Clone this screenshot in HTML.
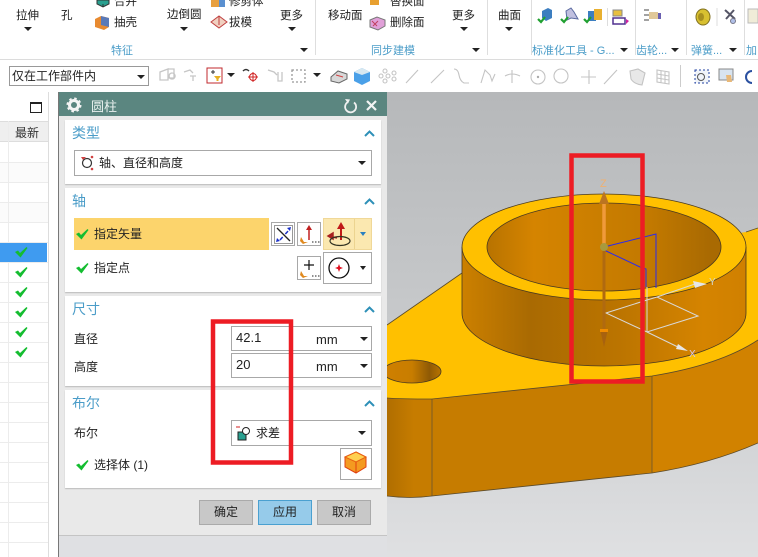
<!DOCTYPE html>
<html><head><meta charset="utf-8"><style>
html,body{margin:0;padding:0;background:#fff}
#p{position:relative;width:758px;height:557px;overflow:hidden;font-family:"Liberation Sans","Noto Sans CJK SC",sans-serif;font-size:11px;color:#222}
.a{position:absolute;white-space:nowrap}
.r{position:absolute;box-sizing:border-box}
.h{color:#4a9cc8;font-size:14px}
.card{position:absolute;left:65px;width:316px;background:#fff;box-shadow:0 1px 1px #bbb}
.box{position:absolute;box-sizing:border-box;border:1px solid #a8a8a8;background:#fff}
.tri{position:absolute;width:0;height:0;border-left:4px solid transparent;border-right:4px solid transparent;border-top:4px solid #222}
.sep{position:absolute;top:0;height:55px;width:1px;background:#dedede}
svg{position:absolute;left:0;top:0}
</style></head><body><div id="p">
<!-- ribbon -->
<div class="r" style="left:0;top:0;width:758px;height:60px;background:#fff;border-bottom:1px solid #dcdcdc"></div>
<div class="sep" style="left:315px"></div><div class="sep" style="left:487px"></div><div class="sep" style="left:531px"></div><div class="sep" style="left:635px"></div><div class="sep" style="left:686px"></div><div class="sep" style="left:744px"></div>
<div class="a" style="left:16px;top:7px;font-size:11.500px">拉伸</div><div class="a" style="left:61px;top:7px;font-size:11.500px">孔</div>
<div class="a" style="left:114px;top:-7px;font-size:11.500px">合并</div><div class="a" style="left:114px;top:14px;font-size:11.500px">抽壳</div>
<div class="a" style="left:167px;top:6px;font-size:11.500px">边倒圆</div>
<div class="a" style="left:229px;top:-7px;font-size:11.500px">修剪体</div><div class="a" style="left:229px;top:14px;font-size:11.500px">拔模</div>
<div class="a" style="left:280px;top:7px;font-size:11.500px">更多</div><div class="a" style="left:328px;top:7px;font-size:11.500px">移动面</div>
<div class="a" style="left:390px;top:-7px;font-size:11.500px">替换面</div><div class="a" style="left:390px;top:14px;font-size:11.500px">删除面</div>
<div class="a" style="left:452px;top:7px;font-size:11.500px">更多</div><div class="a" style="left:498px;top:7px;font-size:11.500px">曲面</div>
<div class="tri" style="left:24px;top:27px"></div><div class="tri" style="left:180px;top:27px"></div><div class="tri" style="left:288px;top:27px"></div><div class="tri" style="left:460px;top:27px"></div><div class="tri" style="left:505px;top:27px"></div>
<div class="tri" style="left:300px;top:48px"></div><div class="tri" style="left:472px;top:48px"></div><div class="tri" style="left:620px;top:48px"></div><div class="tri" style="left:671px;top:48px"></div><div class="tri" style="left:729px;top:48px"></div>
<div class="a h" style="left:111px;top:42px;font-size:11px">特征</div>
<div class="a h" style="left:371px;top:42px;font-size:11px">同步建模</div>
<div class="a h" style="left:532px;top:42px;font-size:11px">标准化工具 - G...</div>
<div class="a h" style="left:636px;top:42px;font-size:11px">齿轮...</div>
<div class="a h" style="left:691px;top:42px;font-size:11px">弹簧...</div>
<div class="a h" style="left:746px;top:42px;font-size:11px">加</div>
<!-- filter bar -->
<div class="r" style="left:0;top:60px;width:758px;height:32px;background:#fff"></div>
<div class="box" style="left:9px;top:66px;width:140px;height:20px;border-color:#999"></div>
<div class="a" style="left:12px;top:67px;font-size:12px;line-height:18px">仅在工作部件内</div>
<div class="tri" style="left:137px;top:75px"></div><div class="tri" style="left:227px;top:73px"></div><div class="tri" style="left:313px;top:73px"></div>
<!-- left table -->
<div class="r" style="left:0;top:92px;width:59px;height:465px;background:#fff;border-right:1px solid #777"></div>
<div class="r" style="left:30px;top:102px;width:12px;height:11px;border:1px solid #222;border-top:2px solid #222"></div>
<div class="r" style="left:0;top:121px;width:48px;height:21px;background:#efefef;border-top:1px solid #ddd;border-bottom:1px solid #ddd"></div>
<div class="a" style="left:15px;top:124px;font-size:12px;color:#333">最新</div>
<svg width="58" height="557">
<rect x="0" y="163" width="48" height="19" fill="#fbfbfb"/><rect x="0" y="203" width="48" height="19" fill="#fbfbfb"/>
<g stroke="#ececec"><path d="M8.500 121V557"/>
<path d="M0 162.500H48M0 182.500H48M0 202.500H48M0 222.500H48M0 242.500H48M0 262.500H48M0 282.500H48M0 302.500H48M0 322.500H48M0 342.500H48M0 362.500H48M0 382.500H48M0 402.500H48M0 422.500H48M0 442.500H48M0 462.500H48M0 482.500H48M0 502.500H48M0 522.500H48M0 542.500H48"/></g>
<path d="M48.500 92V557" stroke="#ddd"/>
<rect x="0" y="243" width="47" height="19" fill="#3f9bf0"/>
<g fill="#14bd30"><path d="M15 252l3-1.500 2 2.500 6.500-6 1 1-7 9.500z"/>
<path d="M15 272l3-1.500 2 2.500 6.500-6 1 1-7 9.500z"/><path d="M15 292l3-1.500 2 2.500 6.500-6 1 1-7 9.500z"/><path d="M15 312l3-1.500 2 2.500 6.500-6 1 1-7 9.500z"/><path d="M15 332l3-1.500 2 2.500 6.500-6 1 1-7 9.500z"/><path d="M15 352l3-1.500 2 2.500 6.500-6 1 1-7 9.500z"/></g>
</svg>
<!-- viewport -->
<svg width="758" height="557" viewBox="0 0 758 557">
<defs>
<linearGradient id="bg" x1="0" y1="0" x2="0" y2="1"><stop offset="0" stop-color="#b6b8ba"/><stop offset=".55" stop-color="#c9cbcd"/><stop offset="1" stop-color="#dfe0e2"/></linearGradient>
<linearGradient id="out" x1="0" x2="1" y1="0" y2="0"><stop offset="0" stop-color="#cc8000"/><stop offset=".24" stop-color="#a96a02"/><stop offset=".55" stop-color="#bb7400"/><stop offset=".85" stop-color="#d58400"/><stop offset="1" stop-color="#d08000"/></linearGradient>
<linearGradient id="inn" x1="0" x2="1" y1="0" y2="0"><stop offset="0" stop-color="#b87300"/><stop offset=".2" stop-color="#d58400"/><stop offset=".7" stop-color="#c27900"/><stop offset=".95" stop-color="#a96a02"/><stop offset="1" stop-color="#a96a02"/></linearGradient>
<linearGradient id="hole" x1="0" x2="1" y1="0" y2="0"><stop offset="0" stop-color="#d08000"/><stop offset=".5" stop-color="#c87d00"/><stop offset=".8" stop-color="#8f5a05"/><stop offset="1" stop-color="#b87400"/></linearGradient>
<linearGradient id="sd" x1="0" x2="1" y1="0" y2="0"><stop offset="0" stop-color="#b06e00"/><stop offset=".6" stop-color="#c67c00"/><stop offset="1" stop-color="#c67c00"/></linearGradient>
</defs>
<rect x="387" y="92" width="371" height="465" fill="url(#bg)"/>
<!-- side wall -->
<path d="M387 398L413 399 432 399 652 376Q720 365 758 340V443Q710 464 652 473L432 496Q410 499 387 496Z" fill="#c67c00"/>
<path d="M387 398Q400 399 432 399V496Q410 499 387 496Z" fill="url(#sd)"/>
<path d="M652 376Q720 365 758 340V443Q710 464 652 473Z" fill="#d18200"/>
<path d="M432 399V496M652 376V473" stroke="#6a5430" stroke-width=".8" fill="none"/>
<path d="M387 496Q410 499 432 496L652 473Q710 464 758 443" stroke="#5a4a2a" stroke-width=".8" fill="none"/>
<!-- top face -->
<path d="M387 325L462 273 746 232 758 228V340Q720 365 652 376L432 399Q400 399 387 398Z" fill="#ffc000"/>
<path d="M387 325L462 273M746 232L758 228M387 398Q400 399 432 399L652 376Q720 365 758 340" stroke="#5a4a2a" stroke-width=".8" fill="none"/>
<!-- hole -->
<ellipse cx="412" cy="371.500" rx="29" ry="11.500" fill="url(#hole)" stroke="#4a3a20" stroke-width=".8"/>
<!-- boss -->
<path d="M462 247V313A142 53 0 0 0 746 313V247Z" fill="url(#out)"/>
<path d="M462 247V313A142 53 0 0 0 746 313V247" fill="none" stroke="#4a3a20" stroke-width=".8"/>
<ellipse cx="604" cy="247" rx="142" ry="53" fill="#ffc000" stroke="#4a3a20" stroke-width=".8"/>
<ellipse cx="604" cy="247" rx="117" ry="44" fill="url(#inn)" stroke="#4a3a20" stroke-width=".8"/>
<!-- triad -->
<path d="M604 247L656 234V288M604 250L640 267 646 269V287" fill="none" stroke="#2a2af0" stroke-width="1"/>
<path d="M647 287V332M606 313L647 300 657 297 698 316 647 332ZM657 297L695 284M647 332L680 348" fill="none" stroke="#d9d9d9" stroke-width="1"/>
<path d="M693 281L707 284 695 288ZM678 344L688 351 676 349Z" fill="#e6e6e6"/>
<text x="709" y="285" font-size="10" fill="#d8d8c8" font-family="Liberation Sans">Y</text>
<text x="689" y="357" font-size="10" fill="#d8c8e8" font-family="Liberation Sans">X</text>
<path d="M604 247V330" stroke="#b06a10" stroke-width="3"/>
<path d="M604 247V200" stroke="#f09a3a" stroke-width="3.500"/>
<path d="M604 191L609 204H599Z" fill="#bb7420"/>
<path d="M600 329H608L604 347Z" fill="#a8620f"/><rect x="600" y="329" width="8" height="3" fill="#f08c00"/>
<circle cx="604" cy="247" r="4" fill="#a89a3c"/>
<text x="600" y="187" font-size="11" fill="#f0b070" font-family="Liberation Sans">Z</text>
</svg>
<!-- toolbar icons -->
<svg width="758" height="92" viewBox="0 0 758 92">
<g fill="none" stroke="#c6c6c6" stroke-width="1.300">
<path d="M160 72l8-3v11h-8zM168 69h6v9h-6M172 73a3 3 0 1 0 .1 0"/><path d="M184 72l6-2 3 3M190 76h6M193 76v5"/>
<path d="M268 70l6 2 3 3M278 72v9h4v-9"/><rect x="292" y="70" width="13" height="12" stroke-dasharray="2 2" stroke="#999"/>
</g>
<rect x="207" y="68" width="15" height="15" fill="#fff" stroke="#c0282c"/><path d="M211 72h4M213 70v4" stroke="#333"/><path d="M214 76h7l-2.500 3v2h-2v-2z" fill="#e8b020"/>
<path d="M243 71q3-3 6 0" fill="none" stroke="#333" stroke-width="1.500"/><circle cx="253" cy="77" r="3.500" fill="none" stroke="#d02020"/><path d="M248 77h10M253 72v10" stroke="#d02020"/>
<path d="M331 77l7-6 9 3v5l-8 4-8-2z" fill="#d8d8d8" stroke="#666"/><path d="M336 75l7 2" stroke="#d04040"/>
<path d="M354 72l8-4 8 4v9l-8 4-8-4z" fill="#4aa0e8"/><path d="M354 72l8-4 8 4-8 3z" fill="#d8e8f0"/>
<g fill="none" stroke="#c4c4c4" stroke-width="1.100">
<circle cx="388" cy="76" r="2"/><circle cx="381" cy="76" r="2"/><circle cx="385" cy="71" r="2"/><circle cx="385" cy="81" r="2"/><circle cx="394" cy="73" r="2"/><circle cx="394" cy="79" r="2"/>
<path d="M406 83l12-13M431 83l13-13M454 69q4 0 5 6t5 8h5M481 83l4-13 5 5 2 6 3-7M505 76q7-4 15 0M512 70v13"/>
<circle cx="538" cy="77" r="7"/><circle cx="561" cy="76" r="7"/><path d="M581 77h15M589 70v14M604 84l13-14"/>
<path d="M630 71l8-2 7 4-3 12q-8-1-11-6z" fill="#e8e8e8"/><path d="M657 70l12 2v12l-12-2zM657 74l12 2M657 78l12 2M661 71v12M665 72v11"/></g>
<circle cx="538" cy="77" r="1.200" fill="#aaa"/>
<path d="M680.500 65V87" stroke="#ccc"/>
<rect x="695" y="70" width="14" height="13" fill="#f0f4fa" stroke="#2040a0" stroke-dasharray="2 2"/><circle cx="701" cy="77" r="3.500" fill="none" stroke="#555"/>
<rect x="719" y="69" width="14" height="11" fill="#d8e4f0" stroke="#888"/><path d="M726 75h5l1 7h-5z" fill="#e8b878"/>
<path d="M752 71a6 6 0 0 0 0 12" fill="none" stroke="#2a50a0" stroke-width="2"/>
<!-- ribbon icons -->
<path d="M97 0h12v4l-6 3-6-3zM103 4v3" fill="#2aa090" stroke="#333"/>
<path d="M95 19l6-3 8 2v9l-5 3-9-3z" fill="#e88a30"/><path d="M101 16l8 2v9l-8-2z" fill="#5a7ab8"/>
<path d="M211 22l8-6 8 6-8 6z" fill="#f0d0c0" stroke="#c04040"/><path d="M219 16v9" stroke="#c04040"/>
<path d="M211 -3h8V7h-8z" fill="#e8a040"/><path d="M219 -3h6V7h-6z" fill="#5a90d0"/>
<path d="M370 0h9v5h-9z" fill="#e8a030"/><path d="M370 20l7-3 8 3v6l-7 4-8-3z" fill="#e0a0d8" stroke="#777"/><path d="M372 21l5 5M378 21l-5 5" stroke="#c04060"/>
<path d="M542 11l6-3 4 2v8l-6 3-4-3z" fill="#3c7ec0"/><path d="M538 19l3 3 4-5" stroke="#20a030" stroke-width="2.200" fill="none"/>
<path d="M566 11l5-3 3 4 4 7-7-1-4 2z" fill="#c0c0e0" stroke="#5a6aa0"/><path d="M561 19l3 3 4-5" stroke="#20a030" stroke-width="2.200" fill="none"/>
<rect x="588" y="11" width="8" height="10" fill="#3c7ec0"/><rect x="594" y="9" width="8" height="11" fill="#e8b030"/><path d="M584 19l3 3 4-5" stroke="#20a030" stroke-width="2.200" fill="none"/>
<rect x="613" y="10" width="9" height="6" fill="#e8c040" stroke="#888"/><rect x="613" y="18" width="12" height="6" fill="#fff" stroke="#503090" stroke-width="1.500"/><path d="M626 19l3 2-3 3z" fill="#d020a0"/><path d="M607.500 8v18" stroke="#ddd"/>
<path d="M644 10h5M644 15h5M644 20h5" stroke="#444"/><rect x="649" y="12" width="9" height="7" fill="#e0c898"/><rect x="658" y="13" width="3" height="6" fill="#6a60b0"/>
<ellipse cx="703" cy="17" rx="7" ry="8" fill="#d8c030" stroke="#807020"/><ellipse cx="701" cy="17" rx="3" ry="4" fill="#a89020"/>
<path d="M717 8v18" stroke="#ddd"/><path d="M725 10l10 9M734 10l-8 9" stroke="#556" stroke-width="2"/><circle cx="733" cy="21" r="2.500" fill="#b0c0e8" stroke="#778"/>
<path d="M748 9h10v14h-10z" fill="#f0ecd8" stroke="#bbb"/>
</svg>
<!-- dialog -->
<div class="r" style="left:59px;top:92px;width:328px;height:465px;background:#dfe0e3"></div>
<div class="r" style="left:59px;top:116px;width:328px;height:420px;background:#e9e9e9;border-bottom:1px solid #c4c4c4"></div>
<div class="r" style="left:59px;top:92px;width:328px;height:24px;background:#5b8680"></div>
<div class="a" style="left:91px;top:96px;font-size:13px;color:#e8f0ee">圆柱</div>
<div class="card" style="top:120px;height:64px"></div>
<div class="card" style="top:188px;height:104px"></div>
<div class="card" style="top:296px;height:90px"></div>
<div class="card" style="top:390px;height:98px"></div>
<div class="a h" style="left:72px;top:123px">类型</div><div class="a h" style="left:72px;top:191px">轴</div><div class="a h" style="left:72px;top:299px">尺寸</div><div class="a h" style="left:72px;top:393px">布尔</div>
<div class="box" style="left:74px;top:150px;width:298px;height:26px"></div>
<div class="a" style="left:99px;top:154px;font-size:12px">轴、直径和高度</div>
<div class="tri" style="left:358px;top:161px"></div>
<div class="r" style="left:74px;top:218px;width:195px;height:32px;background:#fcd46c"></div>
<div class="a" style="left:94px;top:225px;font-size:12px">指定矢量</div>
<div class="a" style="left:94px;top:259px;font-size:12px">指定点</div>
<div class="box" style="left:271px;top:222px;width:24px;height:24px"></div>
<div class="box" style="left:297px;top:222px;width:24px;height:24px"></div>
<div class="box" style="left:297px;top:256px;width:24px;height:24px"></div>
<div class="r" style="left:323px;top:218px;width:49px;height:32px;background:#fbe8b0;border:1px solid #f0d898"></div>
<div class="r" style="left:354px;top:219px;width:1px;height:30px;background:#ecd490"></div>
<div class="box" style="left:323px;top:252px;width:49px;height:32px"></div>
<div class="tri" style="left:360px;top:266px;border-left-width:3px;border-right-width:3px"></div>
<div class="tri" style="left:360px;top:232px;border-left-width:3px;border-right-width:3px;border-top-color:#2a80c0"></div>
<div class="a" style="left:74px;top:330px;font-size:12px">直径</div><div class="a" style="left:74px;top:358px;font-size:12px">高度</div>
<div class="box" style="left:231px;top:326px;width:141px;height:25px"></div>
<div class="box" style="left:231px;top:353px;width:141px;height:25px"></div>
<div class="a" style="left:236px;top:330px;font-size:13px">42.1</div><div class="a" style="left:236px;top:357px;font-size:13px">20</div>
<div class="a" style="left:316px;top:332px;font-size:13px">mm</div><div class="a" style="left:316px;top:359px;font-size:13px">mm</div>
<div class="tri" style="left:360px;top:337px"></div><div class="tri" style="left:360px;top:364px"></div>
<div class="a" style="left:74px;top:424px;font-size:12px">布尔</div>
<div class="box" style="left:231px;top:420px;width:141px;height:26px"></div>
<div class="a" style="left:256px;top:424px;font-size:12px">求差</div>
<div class="tri" style="left:358px;top:431px"></div>
<div class="a" style="left:94px;top:456px;font-size:12px">选择体 (1)</div>
<div class="box" style="left:340px;top:448px;width:32px;height:32px"></div>
<div class="r" style="left:199px;top:500px;width:54px;height:25px;background:#c8c8c8;border:1px solid #aaa;text-align:center;line-height:23px;font-size:12px">确定</div>
<div class="r" style="left:258px;top:500px;width:54px;height:25px;background:#96cbea;border:1px solid #4aa0d0;text-align:center;line-height:23px;font-size:12px">应用</div>
<div class="r" style="left:317px;top:500px;width:54px;height:25px;background:#c8c8c8;border:1px solid #aaa;text-align:center;line-height:23px;font-size:12px">取消</div>
<!-- dialog icons -->
<svg width="758" height="557" viewBox="0 0 758 557">
<circle cx="74" cy="105" r="4.500" fill="none" stroke="#f4f4f4" stroke-width="3"/><circle cx="74" cy="105" r="6.500" fill="none" stroke="#f4f4f4" stroke-width="2" stroke-dasharray="2.500 2.600"/>
<path d="M348 102a5.500 5.500 0 1 0 6 .5" fill="none" stroke="#f0f0f0" stroke-width="1.800"/><path d="M345 99l5 .5-2 4z" fill="#f0f0f0"/>
<path d="M367 101l9 9M376 101l-9 9" stroke="#f4f4f4" stroke-width="2.200"/>
<g fill="none" stroke="#2e90b8" stroke-width="2"><path d="M365 136l4.500-4.500 4.500 4.500M365 204l4.500-4.500 4.500 4.500M365 312l4.500-4.500 4.500 4.500M365 406l4.500-4.500 4.500 4.500"/></g>
<g fill="#14bd30"><path d="M76 234l3-1.500 2 2.500 6.500-6 1 1-7 9.500z"/><path d="M76 268l3-1.500 2 2.500 6.500-6 1 1-7 9.500z"/><path d="M76 465l3-1.500 2 2.500 6.500-6 1 1-7 9.500z"/></g>
<circle cx="87" cy="163" r="4.500" fill="none" stroke="#333" stroke-width="1.200"/><path d="M81 157h5l-3 3z" fill="#d04040"/><circle cx="92" cy="157" r="1.300" fill="#d04040"/><circle cx="92" cy="169" r="1.300" fill="#d04040"/>
<rect x="274.500" y="225.500" width="18" height="18" fill="none" stroke="#333" stroke-dasharray="1 1"/><path d="M277 228l13 13" stroke="#222" stroke-width="1.300"/><path d="M291 227l-4 1 3 3zM276 242l4-1-3-3z" fill="#1a30c8"/><path d="M280 240l9-10" stroke="#1a30c8" stroke-width="1.500" stroke-dasharray="4 4"/>
<path d="M309 228v12" stroke="#c02020" stroke-width="1.500"/><path d="M309 225l3 5h-6z" fill="#c02020"/><path d="M301 237l3 5 4 0-5 2-3-3z" fill="#e08a20"/><path d="M312 242h1.500M315 242h1.500M318 242h1.500" stroke="#222"/>
<path d="M309 260v10M304 265h10" stroke="#111" stroke-width="1.200"/><path d="M301 271l3 5 4 0-5 2-3-3z" fill="#e08a20"/><path d="M312 276h1.500M315 276h1.500M318 276h1.500" stroke="#222"/>
<path d="M341 226v14" stroke="#c01818" stroke-width="2"/><path d="M341 222l4 7h-8z" fill="#c01818"/><path d="M329 236l8 2M328 236l5-3v6z" fill="#a82020" stroke="#a82020" stroke-width="1.500"/><ellipse cx="340" cy="241" rx="10" ry="4.500" fill="none" stroke="#332" stroke-width="1.200"/>
<circle cx="339" cy="268" r="10" fill="none" stroke="#111" stroke-width="1.300"/><path d="M339 264l1.500 4-1.500 4-1.500-4zM335 268l4-1.500 4 1.500-4 1.500z" fill="#e01020"/>
<rect x="238" y="432" width="8" height="8" fill="#2aa090" stroke="#222"/><circle cx="246" cy="431" r="3.500" fill="#fff" stroke="#222"/><path d="M236 427h4" stroke="#d02020"/>
<path d="M356 452l10 5v10l-10 6-11-6v-10z" fill="#f49a20" stroke="#e04010"/><path d="M345 457l11 5 10-5-10-5z" fill="#ffd050" stroke="#e86010"/><path d="M356 462v11" stroke="#e04010"/>
<g fill="none" stroke="#ed1c24" stroke-width="4.500">
<rect x="213" y="321.500" width="78" height="141"/>
<rect x="571.500" y="155.500" width="71" height="226"/>
</g>
</svg>
</div></body></html>
